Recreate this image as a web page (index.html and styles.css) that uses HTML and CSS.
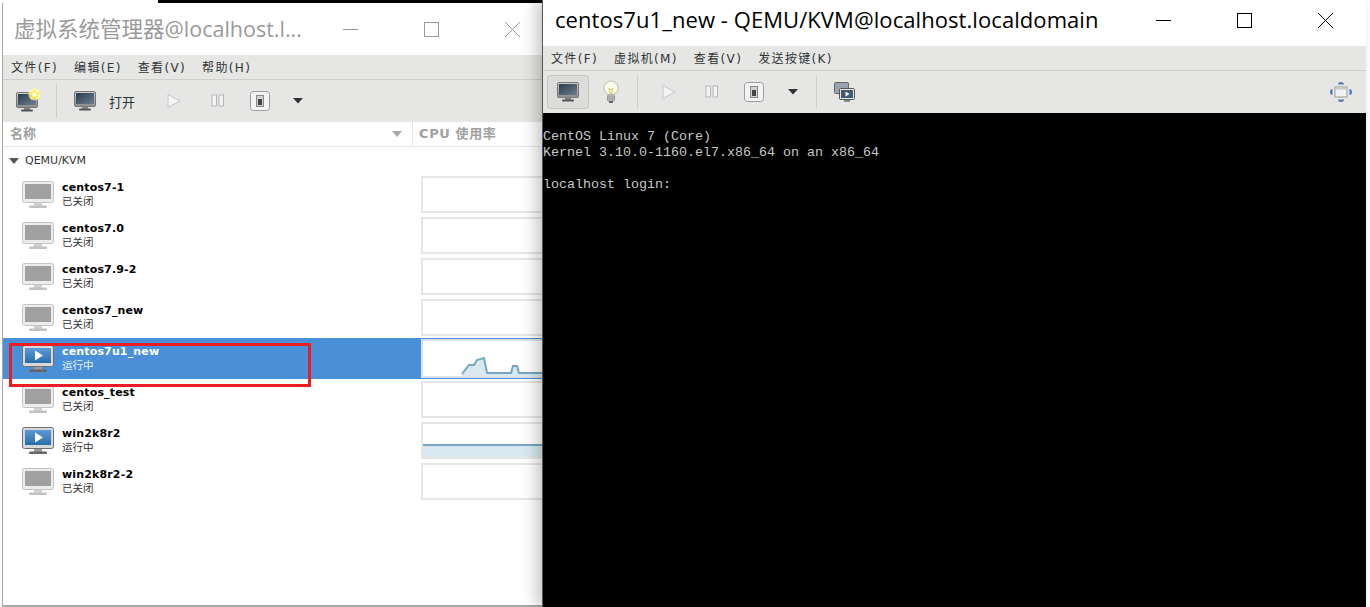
FILE: index.html
```html
<!DOCTYPE html>
<html lang="zh">
<head>
<meta charset="utf-8">
<title>virt-manager</title>
<link rel="stylesheet" href="styles.css">
</head>
<body>
<svg class="defs" width="0" height="0" aria-hidden="true">
  <defs>
    <linearGradient id="bezel" x1="0" y1="0" x2="0" y2="1"><stop offset="0" stop-color="#cfcfcf"/><stop offset="1" stop-color="#8b8b8b"/></linearGradient>
    <linearGradient id="screen-dark" x1="0" y1="0" x2="1" y2="1"><stop offset="0" stop-color="#2b3a4d"/><stop offset="1" stop-color="#6f7f93"/></linearGradient>
    <linearGradient id="screen-blue" x1="0" y1="0" x2="0" y2="1"><stop offset="0" stop-color="#5b9bd5"/><stop offset="1" stop-color="#2a6cab"/></linearGradient>
    <symbol id="vm-off" viewBox="0 0 32 28">
      <rect x=".5" y=".5" width="31" height="21" rx="2" fill="#ececec" stroke="#c4c4c4"/>
      <rect x="3" y="3" width="26" height="15" fill="#a0a0a0"/>
      <rect x="12" y="22" width="8" height="3" fill="#d0d0d0"/>
      <rect x="7" y="24.500" width="18" height="2.500" rx="1" fill="#c2c2c2"/>
    </symbol>
    <symbol id="vm-run" viewBox="0 0 32 28">
      <rect x=".5" y=".5" width="31" height="21" rx="2" fill="#d8d8d8" stroke="#6f6f6f"/>
      <rect x="3" y="3" width="26" height="15" fill="url(#screen-blue)"/>
      <path d="M13 5.500v10l8-5z" fill="#fff"/>
      <rect x="12" y="22" width="8" height="3" fill="#999"/>
      <rect x="7" y="24.500" width="18" height="2.500" rx="1" fill="#666"/>
    </symbol>
    <symbol id="mon" viewBox="0 0 22 20">
      <rect x=".5" y=".5" width="21" height="15" rx="1.500" fill="url(#bezel)" stroke="#777"/>
      <rect x="2" y="2" width="18" height="11" fill="url(#screen-dark)"/>
      <rect x="8" y="16" width="6" height="2" fill="#888"/>
      <rect x="5" y="17.500" width="12" height="2" rx="1" fill="#555"/>
    </symbol>
    <symbol id="play" viewBox="0 0 14 16"><path d="M1 1.500v13l12-6.500z" fill="#f3f3f3" stroke="#c4c8cc"/></symbol>
    <symbol id="pause" viewBox="0 0 14 14"><rect x="1" y="1" width="4.500" height="11" fill="#f3f3f3" stroke="#b4b8bc"/><rect x="8" y="1" width="4.500" height="11" fill="#f3f3f3" stroke="#b4b8bc"/></symbol>
    <symbol id="power" viewBox="0 0 20 20">
      <rect x=".5" y=".5" width="19" height="19" rx="3" fill="#f4f4f4" stroke="#9c9c9c"/>
      <rect x="6.500" y="4.500" width="7" height="11" fill="#d2d2d2" stroke="#888"/>
      <rect x="8" y="8" width="4" height="6" fill="#444"/>
    </symbol>
    <symbol id="caret" viewBox="0 0 12 7"><path d="M1 0h10L6 5.500z" fill="#2e3436"/></symbol>
    <symbol id="t-min" viewBox="0 0 15 15"><path d="M0 7.500h15" stroke="currentColor" fill="none"/></symbol>
    <symbol id="t-max" viewBox="0 0 15 15"><rect x=".5" y=".5" width="14" height="14" stroke="currentColor" fill="none"/></symbol>
    <symbol id="t-close" viewBox="0 0 15 15"><path d="M0 0l15 15M15 0L0 15" stroke="currentColor" fill="none"/></symbol>
  </defs>
</svg>

<main class="desktop">
  <div class="behind"><span class="behind-text">&lt;/controller&gt;</span></div>

  <section class="window manager">
    <header class="titlebar manager-title">
      <h1 class="title-text">虚拟系统管理器@localhost.l...</h1>
      <div class="win-controls">
        <svg class="ctl"><use href="#t-min"/></svg>
        <svg class="ctl"><use href="#t-max"/></svg>
        <svg class="ctl"><use href="#t-close"/></svg>
      </div>
    </header>
    <nav class="menubar">
      <span>文件(F)</span><span>编辑(E)</span><span>查看(V)</span><span>帮助(H)</span>
    </nav>
    <div class="toolbar manager-tools">
      <span class="new-vm">
        <svg class="i-mon"><use href="#mon"/></svg>
        <svg class="star" viewBox="0 0 14 14"><circle cx="7" cy="7" r="6.500" fill="#fff9b0" opacity=".75"/><path d="M7 .5l2 4.200 4.500.5-3.300 3 1 4.500L7 10.400 2.800 12.700l1-4.500-3.300-3 4.500-.5z" fill="#fff14d"/><circle cx="7" cy="7" r="2.500" fill="#fffde0"/></svg>
      </span>
      <i class="sep sep-a"></i>
      <svg class="i-mon"><use href="#mon"/></svg>
      <span class="open-label">打开</span>
      <svg class="i-play pl-a"><use href="#play"/></svg>
      <svg class="i-pause pa-a"><use href="#pause"/></svg>
      <svg class="i-power po-a"><use href="#power"/></svg>
      <svg class="i-caret ca-a"><use href="#caret"/></svg>
    </div>
    <div class="list-head">
      <div class="col-name"><span>名称</span><svg class="head-caret" viewBox="0 0 10 6"><path d="M0 0h10L5 6z" fill="#a8a8a8"/></svg></div>
      <div class="col-cpu">CPU 使用率</div>
    </div>
    <div class="group"><svg class="group-caret" viewBox="0 0 10 6"><path d="M0 0h10L5 6z" fill="#555"/></svg>QEMU/KVM</div>
    <ul class="vm-list">
      <li class="vm">
        <svg class="vm-icon"><use href="#vm-off"/></svg>
        <div class="vm-text"><b>centos7-1</b><small>已关闭</small></div>
        <div class="spark"></div>
      </li>
      <li class="vm">
        <svg class="vm-icon"><use href="#vm-off"/></svg>
        <div class="vm-text"><b>centos7.0</b><small>已关闭</small></div>
        <div class="spark"></div>
      </li>
      <li class="vm">
        <svg class="vm-icon"><use href="#vm-off"/></svg>
        <div class="vm-text"><b>centos7.9-2</b><small>已关闭</small></div>
        <div class="spark"></div>
      </li>
      <li class="vm">
        <svg class="vm-icon"><use href="#vm-off"/></svg>
        <div class="vm-text"><b>centos7_new</b><small>已关闭</small></div>
        <div class="spark"></div>
      </li>
      <li class="vm selected">
        <svg class="vm-icon"><use href="#vm-run"/></svg>
        <div class="vm-text"><b>centos7u1_new</b><small>运行中</small></div>
        <div class="spark">
          <svg class="chart" viewBox="0 0 120 35">
            <path d="M39 33L46 24H51L54 19L61 17L64 32H88L90 25H94L96 32H120V35H39Z" fill="#d9e8f0"/>
            <path d="M39 33L46 24H51L54 19L61 17L64 32H88L90 25H94L96 32H120" fill="none" stroke="#74a8c0" stroke-width="2"/>
          </svg>
        </div>
      </li>
      <li class="vm">
        <svg class="vm-icon"><use href="#vm-off"/></svg>
        <div class="vm-text"><b>centos_test</b><small>已关闭</small></div>
        <div class="spark"></div>
      </li>
      <li class="vm">
        <svg class="vm-icon"><use href="#vm-run"/></svg>
        <div class="vm-text"><b>win2k8r2</b><small>运行中</small></div>
        <div class="spark">
          <svg class="chart" viewBox="0 0 120 33">
            <rect x="0" y="21" width="120" height="12" fill="#d9e8f0"/>
            <path d="M0 21H120" fill="none" stroke="#74a8c0" stroke-width="2"/>
          </svg>
        </div>
      </li>
      <li class="vm">
        <svg class="vm-icon"><use href="#vm-off"/></svg>
        <div class="vm-text"><b>win2k8r2-2</b><small>已关闭</small></div>
        <div class="spark"></div>
      </li>
    </ul>
    <div class="annotation"></div>
  </section>

  <section class="window console">
    <header class="titlebar console-title">
      <h1 class="title-text">centos7u1_new - QEMU/KVM@localhost.localdomain</h1>
      <div class="win-controls">
        <svg class="ctl"><use href="#t-min"/></svg>
        <svg class="ctl"><use href="#t-max"/></svg>
        <svg class="ctl"><use href="#t-close"/></svg>
      </div>
    </header>
    <nav class="menubar">
      <span>文件(F)</span><span>虚拟机(M)</span><span>查看(V)</span><span>发送按键(K)</span>
    </nav>
    <div class="toolbar console-tools">
      <span class="pressed"><svg class="i-mon"><use href="#mon"/></svg></span>
      <svg class="i-bulb" viewBox="0 0 16 24">
        <circle cx="8" cy="8" r="7" fill="#fbfbe8" stroke="#bdbdbd"/>
        <path d="M5 8c2 2 4 2 6 0M6.500 9l1 6M9.500 9l-1 6" stroke="#d8c85c" fill="none"/>
        <rect x="4.500" y="15" width="7" height="6" rx="1" fill="#d0d0d0" stroke="#999"/>
        <path d="M4.500 17h7M4.500 19h7" stroke="#888"/>
        <rect x="6" y="21" width="4" height="2" fill="#666"/>
      </svg>
      <i class="sep sep-b"></i>
      <svg class="i-play pl-b"><use href="#play"/></svg>
      <svg class="i-pause pa-b"><use href="#pause"/></svg>
      <svg class="i-power po-b"><use href="#power"/></svg>
      <svg class="i-caret ca-b"><use href="#caret"/></svg>
      <i class="sep sep-c"></i>
      <svg class="i-cons" viewBox="0 0 21 21">
        <rect x=".5" y=".5" width="14" height="11" rx="1" fill="#9aa4b0" stroke="#666"/>
        <rect x="5.500" y="6.500" width="15" height="11" rx="1" fill="#e8e8e8" stroke="#555"/>
        <rect x="7" y="8" width="12" height="8" fill="#44586e"/>
        <path d="M11.500 9.500v5l4-2.500z" fill="#fff"/>
        <rect x="10" y="18" width="6" height="2" fill="#888"/>
      </svg>
      <svg class="i-full" viewBox="0 0 22 20">
        <path d="M8 2.500a3 2.500 0 0 1 6 0zM8 17.500a3 2.500 0 0 0 6 0zM2.500 7a2.500 3 0 0 0 0 6zM19.500 7a2.500 3 0 0 1 0 6z" fill="#4f7cb8"/>
        <rect x="5" y="5" width="12" height="10" fill="#f2f2f2" stroke="#999"/>
        <rect x="5.500" y="5.500" width="11" height="2" fill="#c8c8c8"/>
      </svg>
    </div>
    <pre class="terminal">CentOS Linux 7 (Core)
Kernel 3.10.0-1160.el7.x86_64 on an x86_64

localhost login:</pre>
  </section>
</main>
</body>
</html>
```

FILE: styles.css
```css
* { box-sizing: border-box; }
html, body { margin: 0; height: 100%; overflow: hidden; background: #fff; }
ul { margin: 0; padding: 0; list-style: none; }
h1 { margin: 0; font-weight: 400; }
svg { display: block; flex: none; }
.defs { position: absolute; }

.desktop {
  position: relative;
  width: 1370px;
  height: 607px;
  overflow: hidden;
  background: #fff;
  font-family: "DejaVu Sans", "Noto Sans CJK SC", sans-serif;
}

.behind {
  position: absolute;
  left: 158px;
  top: 0;
  width: 400px;
  height: 4px;
  overflow: hidden;
  background: #000;
}
.behind-text {
  display: block;
  margin: -12px 0 0 46px;
  font: 15.500px/16px "Liberation Mono", monospace;
  color: #2fb5b0;
}

.window { position: absolute; display: flex; flex-direction: column; background: #fff; overflow: hidden; }
.manager {
  left: 2px;
  top: 3px;
  width: 541px;
  height: 604px;
  border-left: 1px solid #a8a8a4;
  border-bottom: 2px solid #a8a8a4;
}
.console {
  left: 542px;
  top: 0;
  width: 824px;
  height: 607px;
  border-left: 1px solid #555;
  overflow: visible;
  box-shadow: -6px 0 14px rgba(0, 0, 0, .22);
}

.titlebar { display: flex; align-items: center; flex: none; background: #fff; }
.manager-title { height: 52px; padding-left: 11px; color: #9a9a9a; }
.console-title { height: 46px; padding: 0 0 5px 12px; color: #000; }
.title-text {
  flex: 1;
  font-family: "Open Sans", "Noto Sans CJK SC", sans-serif;
  font-size: 22px;
  line-height: 28px;
  white-space: nowrap;
}
.manager-title .title-text { font-size: 21.500px; }
.console-title .title-text { margin-bottom: 4px; letter-spacing: .07px; }
.win-controls { display: flex; gap: 66px; }
.manager-title .win-controls { padding-right: 23px; }
.console-title .win-controls { padding-right: 33px; }
.ctl { width: 15px; height: 15px; }

.menubar {
  flex: none;
  display: flex;
  align-items: center;
  height: 25px;
  padding: 0 0 2px 8px;
  gap: 16px;
  background: #e6e6e4;
  border-bottom: 1px solid #cfcfcd;
  font-size: 12px;
  letter-spacing: 1.350px;
  color: #2e3436;
}

.toolbar { flex: none; display: flex; align-items: center; background: #e6e6e4; }
.manager-tools { height: 42px; padding-left: 13px; }
.console-tools { height: 42px; padding-left: 4px; }
.i-mon { width: 22px; height: 20px; }
.new-vm { position: relative; display: block; width: 24px; height: 22px; }
.new-vm .i-mon { position: absolute; left: 0; top: 2px; }
.star { position: absolute; right: -1px; top: -2px; width: 13px; height: 13px; }
.sep { display: block; flex: none; width: 1px; height: 34px; background: #cfcfcd; }
.sep-a { margin: 0 17px 0 16px; }
.open-label { margin-left: 13px; font-size: 13px; color: #2e3436; }
.i-play { width: 14px; height: 16px; }
.i-pause { width: 14px; height: 14px; }
.i-power { width: 20px; height: 20px; }
.i-caret { width: 12px; height: 7px; }
.pl-a { margin-left: 32px; }
.pa-a { margin-left: 30px; }
.po-a { margin-left: 25px; }
.ca-a { margin-left: 22px; }

.pressed {
  display: flex;
  align-items: center;
  justify-content: center;
  width: 42px;
  height: 34px;
  background: #dcdcda;
  border: 1px solid #c4c4c2;
  border-radius: 3px;
}
.i-bulb { width: 16px; height: 24px; margin-left: 14px; }
.sep-b { margin: 0 24px 0 18px; }
.pa-b { margin-left: 29px; }
.po-b { margin-left: 25px; }
.ca-b { margin-left: 23px; }
.sep-c { margin: 0 17px 0 17px; }
.i-cons { width: 21px; height: 21px; }
.i-full { width: 22px; height: 20px; margin-left: auto; margin-right: 14px; }

.list-head {
  flex: none;
  display: flex;
  height: 25px;
  background: #fff;
  border-bottom: 1px solid #e6e6e4;
  font-size: 13px;
  font-weight: 700;
  color: #a0a0a0;
}
.col-name {
  display: flex;
  align-items: center;
  justify-content: space-between;
  width: 410px;
  padding: 0 10px 3px 7px;
  border-right: 1px solid #e6e6e4;
}
.head-caret { width: 10px; height: 6px; margin-top: 3px; }
.col-cpu { display: flex; align-items: center; padding: 0 0 3px 6px; letter-spacing: .6px; white-space: nowrap; }

.group {
  flex: none;
  display: flex;
  align-items: center;
  height: 27px;
  padding-left: 6px;
  font-size: 11px;
  color: #2e3436;
}
.group-caret { width: 10px; height: 6px; margin-right: 6px; }

.vm { display: flex; align-items: center; height: 41px; padding-left: 19px; color: #000; }
.vm-icon { width: 32px; height: 28px; }
.vm-text { flex: none; display: flex; flex-direction: column; width: 367px; padding: 0 0 1px 8px; }
.vm-text b { font-size: 11px; line-height: 14px; letter-spacing: .15px; }
.vm-text small { font-size: 10.500px; line-height: 13px; color: #333; }
.spark {
  flex: none;
  width: 124px;
  height: 37px;
  background: #fff;
  border: 2px solid #e6e6e4;
}
.selected { background: #4a90d9; color: #fff; }
.selected .vm-text small { color: #e8f0fa; }
.selected .spark { height: 39px; border-color: #dfe3e8; }
.chart { width: 100%; height: 100%; }

.annotation {
  position: absolute;
  left: 6px;
  top: 340px;
  width: 302px;
  height: 44px;
  border: 3px solid #ed1c24;
}

.terminal {
  flex: 1;
  margin: 0;
  padding: 16px 0 0 0;
  background: #000;
  color: #c8c8c8;
  font: 13.330px/16px "Liberation Mono", monospace;
}
```
